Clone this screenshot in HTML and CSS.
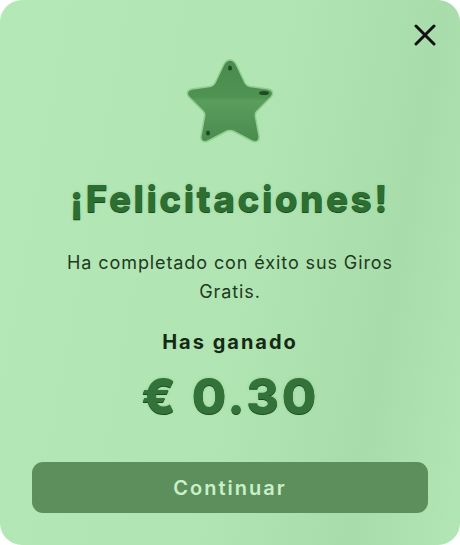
FILE: index.html
```html
<!doctype html>
<html lang="es">
<head>
  <meta charset="utf-8" />
  <title>¡Felicitaciones!</title>
  <link rel="stylesheet" href="styles.css">
</head>
<body>

<div class="card">
  <button class="close" type="button" aria-label="Cerrar">
    <svg width="22" height="22" viewBox="0 0 22 22">
      <path d="M2 2 L20 20 M20 2 L2 20" stroke="#111" stroke-width="3" stroke-linecap="round" fill="none" />
    </svg>
  </button>

  <div class="star">
    <svg width="92" height="88" viewBox="0 0 92 88">
      <defs>
        <linearGradient id="starFill" x1="0" y1="0" x2="0" y2="1">
          <stop offset="0" stop-color="#4a8a4e" />
          <stop offset="0.45" stop-color="#4f9353" />
          <stop offset="0.5" stop-color="#5a9d5c" />
          <stop offset="1" stop-color="#4b8b4f" />
        </linearGradient>
      </defs>
      <path d="M46 4 C49 4 51 6 52.5 9 L61 27 C62 29 63.5 30 66 30.5 L84 33 C89 33.8 90 38 87 41 L73 55 C71.5 56.5 71 58 71.3 60 L75 80 C75.8 85 72 87 68 85 L50 75.5 C47.5 74.3 44.5 74.3 42 75.5 L24 85 C20 87 16.2 85 17 80 L20.7 60 C21 58 20.5 56.5 19 55 L5 41 C2 38 3 33.8 8 33 L26 30.5 C28.5 30 30 29 31 27 L39.5 9 C41 6 43 4 46 4 Z"
        fill="url(#starFill)" stroke="#8fcf90" stroke-width="1.5" />
      <ellipse cx="46" cy="12" rx="2" ry="2.6" fill="#1f4a22" />
      <ellipse cx="80" cy="37" rx="5" ry="2" fill="#1f4a22" />
      <ellipse cx="24" cy="77" rx="2" ry="2.6" fill="#1f4a22" />
    </svg>
  </div>

  <h1 class="title">¡Felicitaciones!</h1>
  <p class="message">Ha completado con éxito sus Giros Gratis.</p>

  <p class="won-label">Has ganado</p>
  <p class="amount">€ 0.30</p>

  <button class="continue" type="button">Continuar</button>
</div>

</body>
</html>
```

FILE: styles.css
```css
html,
body {
  margin: 0;
  padding: 0;
  background-color: #ffffff;
}
body {
  font-family: "Inter", "Noto Sans", sans-serif;
  width: 460px;
  height: 545px;
}
.card {
  position: relative;
  box-sizing: border-box;
  width: 460px;
  height: 545px;
  border-radius: 22px;
  background: linear-gradient(100deg, #b5e8b7 0%, #b0e4b2 55%, #a8dcaa 80%, #b2e6b4 100%);
  display: flex;
  flex-direction: column;
  align-items: center;
  padding: 56px 32px 32px;
  text-align: center;
}
.close {
  position: absolute;
  top: 24px;
  right: 24px;
  padding: 0;
  border: 0;
  background: none;
  cursor: pointer;
  line-height: 0;
}
.star {
  line-height: 0;
}
.title {
  margin: 31px 0 0;
  font-size: 37px;
  font-weight: 800;
  letter-spacing: 2.4px;
  line-height: 48px;
  color: #2d6e32;
  text-shadow: 0 1px 0 #1d4a20, 0 0 3px #8fcf90;
}
.message {
  margin: 25px 0 0;
  max-width: 380px;
  font-size: 18px;
  letter-spacing: 0.9px;
  line-height: 29px;
  color: #1e3a20;
}
.won-label {
  margin: 22px 0 0;
  font-size: 20px;
  font-weight: 700;
  letter-spacing: 2px;
  line-height: 28px;
  color: #142a15;
}
.amount {
  margin: 10px 0 0;
  font-size: 50px;
  font-weight: 800;
  letter-spacing: 2.5px;
  line-height: 60px;
  color: #33733a;
  text-shadow: 0 1px 0 #1d4a20, 0 0 3px #8fcf90;
}
.continue {
  margin-top: auto;
  width: 396px;
  height: 51px;
  border: 0;
  border-radius: 11px;
  background-color: #5c8f5c;
  color: #c9f0c8;
  font-family: inherit;
  font-size: 20px;
  font-weight: 600;
  letter-spacing: 2px;
  cursor: pointer;
}
```
